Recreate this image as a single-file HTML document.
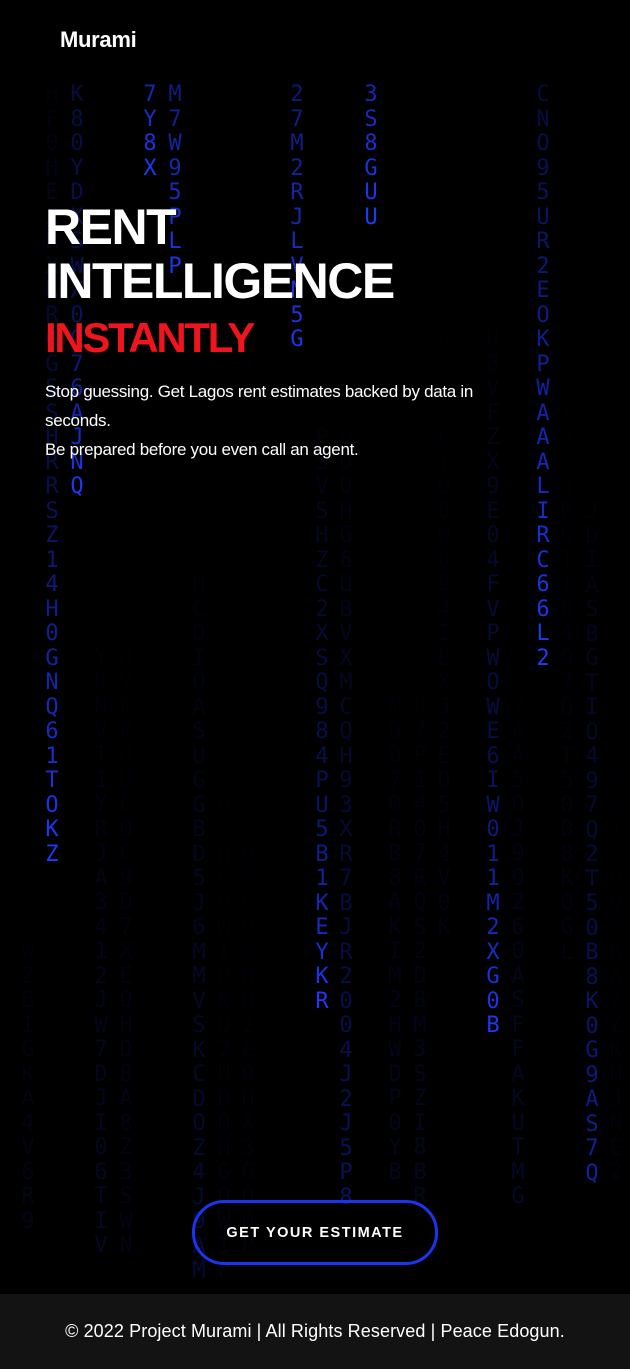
<!DOCTYPE html>
<html><head><meta charset="utf-8"><style>
*{margin:0;padding:0;box-sizing:border-box}
body{width:630px;height:1369px;background:#000;overflow:hidden;position:relative;font-family:"Liberation Sans",sans-serif;color:#fff}
.c{position:absolute;width:14px;word-break:break-all;font-family:"DejaVu Sans Mono","Liberation Mono",monospace;font-size:22px;line-height:24.5px;text-align:center;color:transparent;-webkit-background-clip:text;background-clip:text}
.logo{position:absolute;left:60px;top:27px;font-size:22px;font-weight:bold;letter-spacing:-0.3px}
h1{position:absolute;left:45px;top:200px;font-size:50px;line-height:54px;font-weight:bold;letter-spacing:-1.5px}
.red{position:absolute;left:45px;top:314px;font-size:42px;line-height:48px;font-weight:bold;color:#f0141e;letter-spacing:-2.3px}
p{position:absolute;left:45px;top:377px;font-size:17px;line-height:29px;letter-spacing:-0.3px;width:480px}
.btn{position:absolute;left:192px;top:1200px;width:246px;height:65px;border:3px solid #1a35f0;border-radius:32px;display:flex;align-items:center;justify-content:center;font-size:14.5px;font-weight:bold;letter-spacing:1.5px}
.foot{position:absolute;left:0;top:1294px;width:630px;height:75px;background:rgba(20,20,22,0.93);display:flex;align-items:center;justify-content:center;font-size:18px;letter-spacing:0.1px}
</style></head><body>
<div class="c" style="left:21px;top:940px;background-image:linear-gradient(rgba(20,35,160,.05),rgba(20,35,160,.15))">WZBIGKA4V6R9</div>
<div class="c" style="left:45px;top:83px;background-image:linear-gradient(rgba(20,40,200,.04),rgba(20,40,210,.35) 50%,rgba(30,60,255,1))">HF0HEXRXRRGGSSHRRSZ14H0GNQ61TOKZ</div>
<div class="c" style="left:70px;top:83px;background-image:linear-gradient(rgba(20,40,200,.3),rgba(20,40,210,.45) 60%,rgba(30,60,255,1))">K80YDXSWX0O76AJNQ</div>
<div class="c" style="left:94px;top:646px;background-image:linear-gradient(rgba(20,35,170,.04),rgba(20,35,180,.22))">YKNVT1YRJA3412JW7DJI06TIV</div>
<div class="c" style="left:119px;top:646px;background-image:linear-gradient(rgba(20,35,170,.03),rgba(20,35,180,.13))">HVKP0UC0C9D7XE0HD8A8Z3SWN</div>
<div class="c" style="left:143px;top:83px;background-image:linear-gradient(rgba(30,55,240,.7),rgba(30,60,255,1))">7Y8X</div>
<div class="c" style="left:168px;top:83px;background-image:linear-gradient(rgba(30,55,240,.5),rgba(30,60,255,.95))">M7W95PLP</div>
<div class="c" style="left:192px;top:573px;background-image:linear-gradient(rgba(20,35,170,.05),rgba(20,35,190,.3))">HCDIOASUGGBD5J6MMVSKCDOZ4J9AM</div>
<div class="c" style="left:217px;top:769px;background-image:linear-gradient(rgba(20,35,170,.02),rgba(20,35,170,.09))">2D0HGOWIPKQ2UD0HGOWIP</div>
<div class="c" style="left:241px;top:769px;background-image:linear-gradient(rgba(20,35,170,.02),rgba(20,35,170,.08))">7EJQ8LU5HU2E0UX3GO0P</div>
<div class="c" style="left:290px;top:83px;background-image:linear-gradient(rgba(30,55,240,.45),rgba(30,60,255,.95))">27M2RJLVN5G</div>
<div class="c" style="left:315px;top:426px;background-image:linear-gradient(rgba(20,35,180,.06),rgba(20,40,210,.4) 60%,rgba(30,60,255,1))">PSVSHZC2XSQ984PU5B1KEYKR</div>
<div class="c" style="left:339px;top:426px;background-image:linear-gradient(rgba(20,35,170,.04),rgba(20,40,210,.45))">UD0HG6UBVXMCQH93XR7BJR2004J2J5P8</div>
<div class="c" style="left:364px;top:83px;background-image:linear-gradient(rgba(30,55,240,.7),rgba(30,60,255,1))">3S8GUU</div>
<div class="c" style="left:388px;top:695px;background-image:linear-gradient(rgba(20,35,170,.04),rgba(20,35,180,.16))">M0O70RB8AKIM2HWDP0YB</div>
<div class="c" style="left:413px;top:695px;background-image:linear-gradient(rgba(20,35,170,.04),rgba(20,35,180,.18))">Q7P1407RQS2D8M3SZI8BR</div>
<div class="c" style="left:437px;top:328px;background-image:linear-gradient(rgba(20,35,170,.02),rgba(20,35,170,.1))">U5G2ETU8NQ94IEXJ2ED5H4V0K</div>
<div class="c" style="left:486px;top:328px;background-image:linear-gradient(rgba(20,35,180,.04),rgba(20,40,210,.35) 60%,rgba(30,60,255,1))">H8VFZX9E04FVPWOWE6IW011M2XG0B</div>
<div class="c" style="left:511px;top:695px;background-image:linear-gradient(rgba(20,35,170,.04),rgba(20,35,190,.22))">7AA50J99260ASFFAKUTMG</div>
<div class="c" style="left:536px;top:83px;background-image:linear-gradient(rgba(20,40,210,.25),rgba(25,50,240,.65) 50%,rgba(30,60,255,1))">CNO95UR2EOKPWAAALIRC66L2</div>
<div class="c" style="left:560px;top:328px;background-image:linear-gradient(rgba(20,35,170,.02),rgba(20,35,170,.09))">DJ5I4S4BGTI0497Q2T50B8K0GL</div>
<div class="c" style="left:585px;top:500px;background-image:linear-gradient(rgba(20,35,180,.05),rgba(20,40,210,.3) 60%,rgba(25,50,235,.7))">JDIASBGTIO497Q2T50B8K0G9AS7Q</div>
<div class="c" style="left:609px;top:720px;background-image:linear-gradient(rgba(20,35,170,.02),rgba(20,35,170,.07))">TG8W1Z0Q5RA7ZKHJNE2</div>

<div class="logo">Murami</div>
<h1>RENT<br>INTELLIGENCE</h1>
<div class="red">INSTANTLY</div>
<p>Stop guessing. Get Lagos rent estimates backed by data in seconds.<br>Be prepared before you even call an agent.</p>
<div class="btn">GET YOUR ESTIMATE</div>
<div class="foot">© 2022 Project Murami | All Rights Reserved | Peace Edogun.</div>
</body></html>
